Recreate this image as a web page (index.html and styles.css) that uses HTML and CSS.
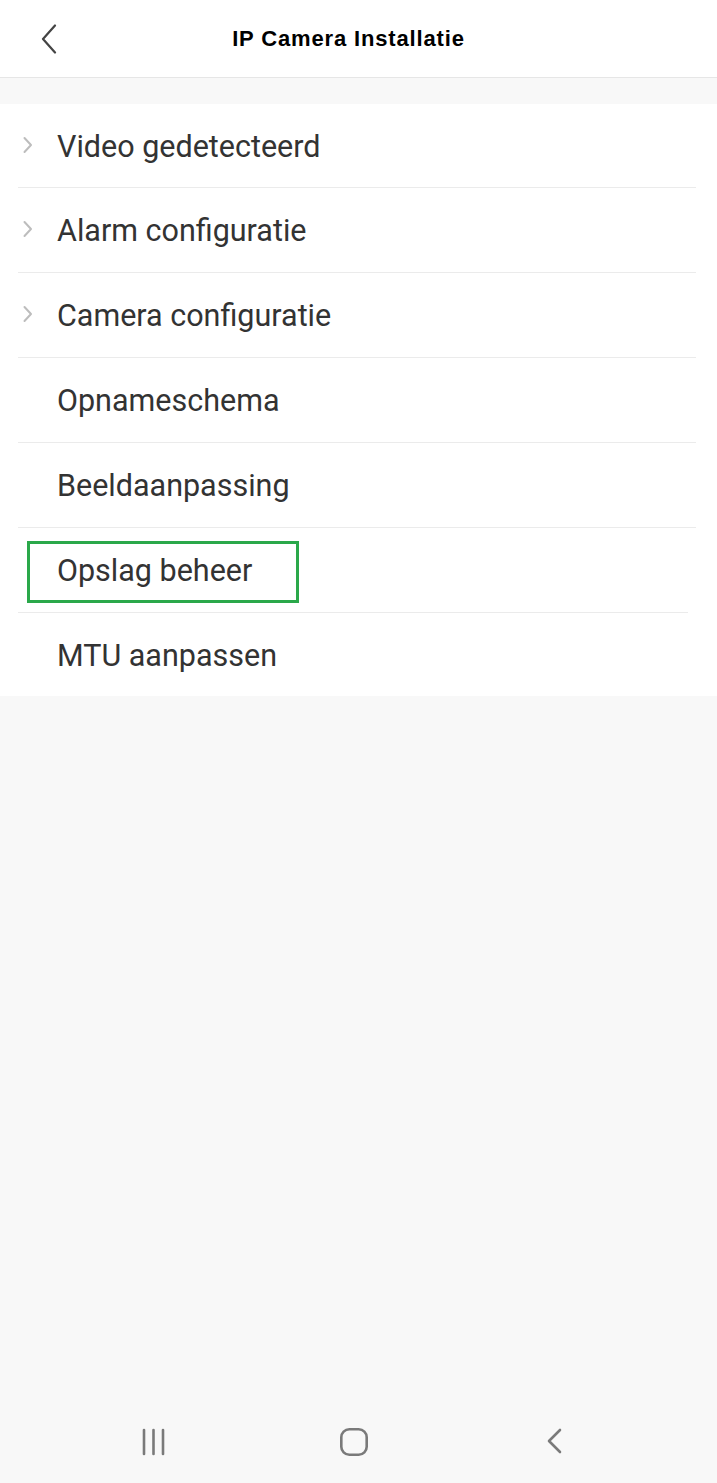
FILE: index.html
```html
<!DOCTYPE html>
<html lang="nl">
<head>
<meta charset="utf-8">
<title>IP Camera Installatie</title>
<link rel="stylesheet" href="styles.css">
</head>
<body>
<div class="screen">
  <header class="topbar">
    <button class="back" aria-label="Terug">
      <svg width="18" height="30" viewBox="0 0 18 30"><path d="M15 1.5 L3 15 L15 28.5" fill="none" stroke="#444" stroke-width="2.2" stroke-linecap="round" stroke-linejoin="round"/></svg>
    </button>
    <h1 class="title">IP Camera Installatie</h1>
  </header>
  <div class="spacer"></div>
  <ul class="menu">
    <li class="item"><span class="chev"><svg width="12" height="18" viewBox="0 0 12 18"><path d="M2.5 2 L9 9 L2.5 16" fill="none" stroke="#bdbdbd" stroke-width="2" stroke-linecap="round" stroke-linejoin="round"/></svg></span><span class="label">Video gedetecteerd</span></li>
    <li class="item"><span class="chev"><svg width="12" height="18" viewBox="0 0 12 18"><path d="M2.5 2 L9 9 L2.5 16" fill="none" stroke="#bdbdbd" stroke-width="2" stroke-linecap="round" stroke-linejoin="round"/></svg></span><span class="label">Alarm configuratie</span></li>
    <li class="item"><span class="chev"><svg width="12" height="18" viewBox="0 0 12 18"><path d="M2.5 2 L9 9 L2.5 16" fill="none" stroke="#bdbdbd" stroke-width="2" stroke-linecap="round" stroke-linejoin="round"/></svg></span><span class="label">Camera configuratie</span></li>
    <li class="item"><span class="chev"></span><span class="label">Opnameschema</span></li>
    <li class="item"><span class="chev"></span><span class="label">Beeldaanpassing</span></li>
    <li class="item item-short"><span class="chev"></span><span class="label">Opslag beheer</span><span class="highlight"></span></li>
    <li class="item"><span class="chev"></span><span class="label">MTU aanpassen</span></li>
  </ul>
  <div class="fill"></div>
  <nav class="navbar">
    <svg class="nav-icon" width="28" height="28" viewBox="0 0 28 28"><g stroke="#7a7a7a" stroke-width="2.6" stroke-linecap="round"><path d="M4 2 V26"/><path d="M13.5 2 V26"/><path d="M23 2 V26"/></g></svg>
    <svg class="nav-icon nav-home" width="30" height="30" viewBox="0 0 30 30"><rect x="2.3" y="2.3" width="25.4" height="25.4" rx="8" fill="none" stroke="#7a7a7a" stroke-width="2.6"/></svg>
    <svg class="nav-icon" width="20" height="30" viewBox="0 0 20 30"><path d="M15 3 L4 14 L15 25" fill="none" stroke="#7a7a7a" stroke-width="2.6" stroke-linecap="round" stroke-linejoin="round"/></svg>
  </nav>
</div>
</body>
</html>
```

FILE: styles.css
```css
html, body {
  margin: 0;
  padding: 0;
  background: #f8f8f8;
}
body {
  font-family: Roboto, "Noto Sans", Arial, sans-serif;
}
.screen {
  width: 717px;
  height: 1483px;
  display: flex;
  flex-direction: column;
  background: #f8f8f8;
}
.topbar {
  height: 77px;
  background: #ffffff;
  border-bottom: 1px solid #e6e6e6;
  display: flex;
  align-items: center;
  justify-content: center;
  position: relative;
  flex: none;
}
.back {
  position: absolute;
  left: 40px;
  top: 24px;
  background: none;
  border: 0;
  padding: 0;
  width: 18px;
  height: 30px;
}
.back svg { display: block; }
.title {
  margin: 0;
  font-family: "Liberation Sans", Arial, sans-serif;
  font-weight: bold;
  font-size: 22px;
  letter-spacing: 0.85px;
  color: #000;
  margin-left: -20px;
}
.spacer {
  height: 26px;
  flex: none;
}
.menu {
  list-style: none;
  margin: 0;
  padding: 0;
  background: #fff;
  flex: none;
}
.item {
  height: 84px;
  margin: 0 21px 0 18px;
  border-bottom: 1px solid #ebebeb;
  display: flex;
  align-items: center;
  position: relative;
}
.item:first-child { height: 83px; }
.item:last-child { border-bottom: 0; height: 83px; }
.item-short { margin-right: 29px; }
.chev {
  width: 39px;
  flex: none;
  display: flex;
  align-items: center;
  padding-left: 4px;
  box-sizing: border-box;
  margin-top: -2px;
}
.chev svg { display: block; }
.label {
  font-size: 30.5px;
  color: #333333;
  margin-top: 1px;
}
.highlight {
  position: absolute;
  left: 9px;
  top: 13px;
  width: 266px;
  height: 56px;
  border: 3px solid #2aa84a;
}
.fill { flex: 1; }
.navbar {
  height: 80px;
  flex: none;
  display: flex;
  align-items: center;
  justify-content: space-between;
  padding: 0 152px 0 140px;
  margin-bottom: 1px;
}
.nav-icon { display: block; }
.nav-home { margin-right: 5px; }
```
